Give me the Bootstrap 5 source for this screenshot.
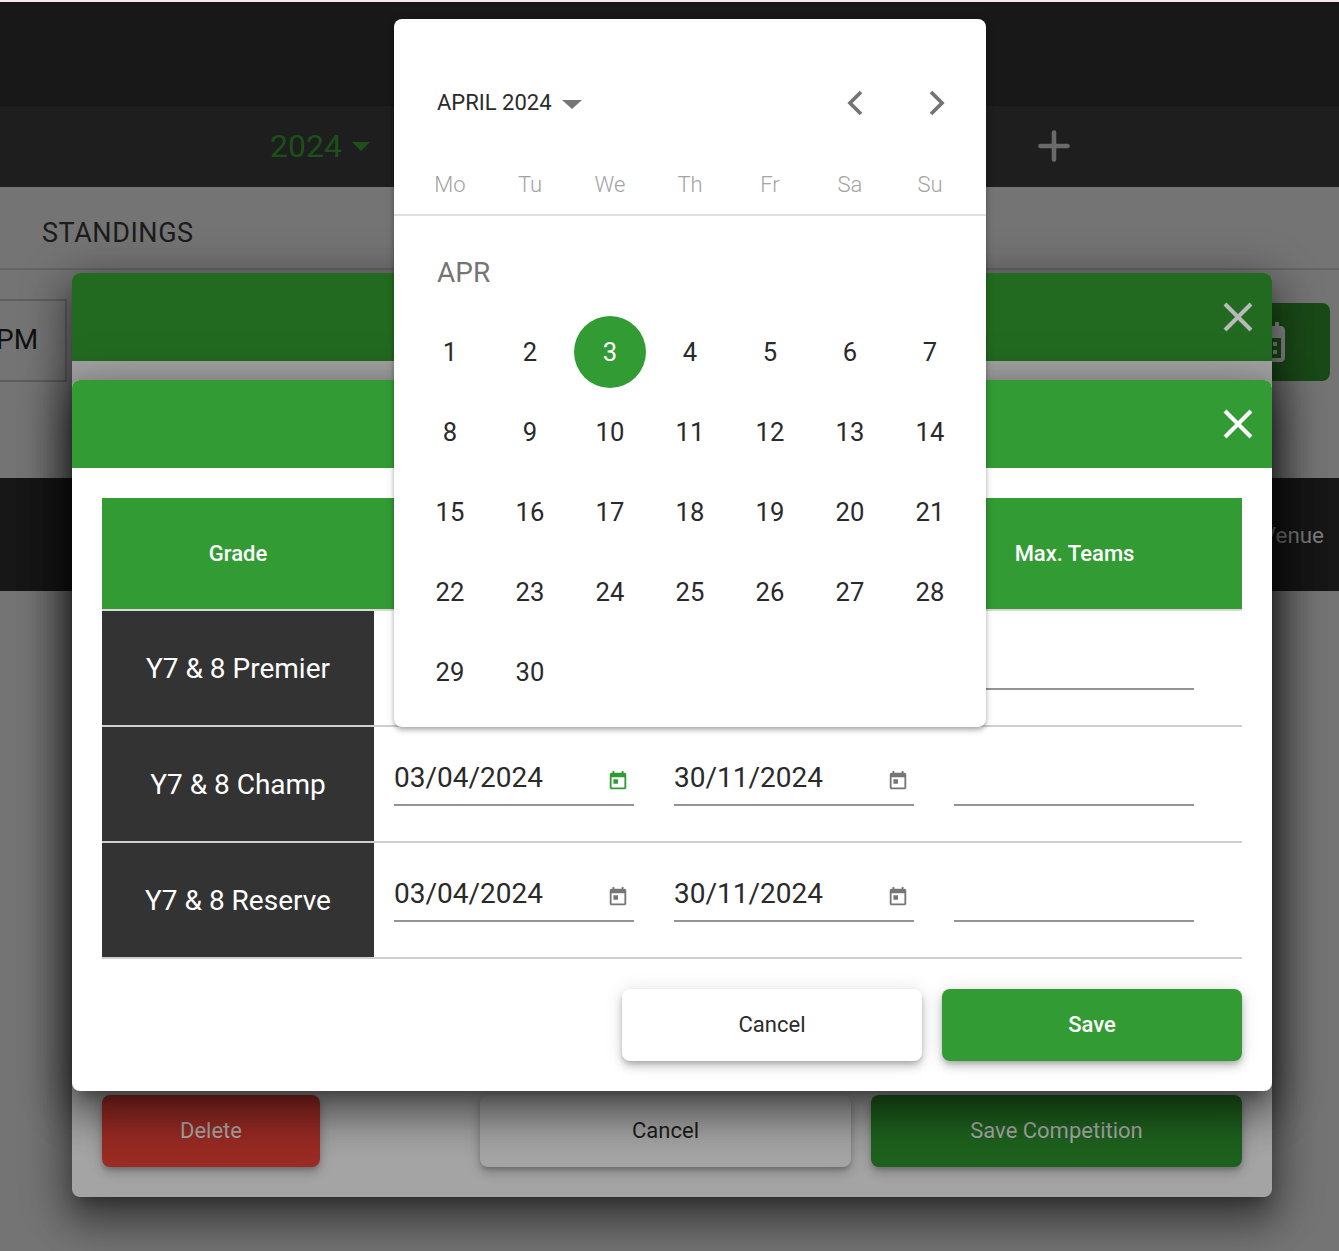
<!DOCTYPE html>
<html lang="en">
<head>
<meta charset="utf-8">
<title>Competition dates</title>
<link rel="stylesheet" href="https://cdn.jsdelivr.net/npm/bootstrap@5.3.0/dist/css/bootstrap.min.css">
<style>
html,body{height:1251px;overflow:hidden;margin:0}
body{font-family:Roboto,"Liberation Sans",sans-serif;background:#747474;color:#222}
.stage{position:relative;width:1339px;height:1251px;overflow:hidden;background:#747474}
.strip{height:2px;background:#f8e9ea}
.topbar{height:104px;background:#181818}
.yearbar{height:81px;background:#1e1e1e;padding-left:270px;padding-right:269px;padding-bottom:1px}
.year{font-size:32px;color:#1b501b;line-height:1}
.yearcaret{width:0;height:0;border-left:9.5px solid transparent;border-right:9.5px solid transparent;border-top:9px solid #1b501b;margin-left:10px}
.tabbar{height:83px;background:#747474;border-bottom:2px solid #656565;padding-left:42px;padding-top:12px;font-size:27px;color:#1c1c1c;letter-spacing:.55px}
.midsec{height:208px;padding-top:29px}
.pmbox{width:77px;height:83px;margin-left:-10px;border:2px solid #5e5e5e;font-size:28px;color:#111;padding-left:4px;padding-bottom:2px}
.calbtn{width:126px;height:78px;margin-top:4px;margin-right:9px;background:#1a4a18;border-radius:8px;padding-left:39px;padding-top:15px}
.calbtn svg{fill:#8a8a8a;display:block}
.darkbar{height:113px;background:#171717;color:#7c7c7c;font-size:22.4px;padding-right:15px;padding-top:3px}
.sheet{position:absolute;left:72px;width:1200px;border-radius:8px;box-shadow:0 24px 38px 3px rgba(0,0,0,.32),0 9px 46px 8px rgba(0,0,0,.28),0 11px 15px -7px rgba(0,0,0,.3)}
.sheet-back{top:273px;height:924px;background:#a4a4a4}
.sheet-front{top:380px;height:711px;background:#fff}
.sheet-head{height:88px;border-radius:8px 8px 0 0;padding-right:16px}
.sheet-back .sheet-head{background:#236a21}
.sheet-front .sheet-head{background:#329b33}
.sheet-x{width:36px;height:36px;display:block;stroke-width:4;fill:none}
.sheet-back .sheet-x{stroke:#b9b9b9}
.sheet-front .sheet-x{stroke:#fff}
.backfoot{position:absolute;left:30px;right:30px;bottom:30px}
.btn.act{height:72px;border:0;border-radius:8px;font-size:22px;padding-bottom:8px;box-shadow:0 3px 5px -1px rgba(0,0,0,.2),0 6px 10px 0 rgba(0,0,0,.14),0 1px 18px 0 rgba(0,0,0,.12)}
.btn.act-del{width:218px;background:#992b24;color:#a9a9a9}
.btn.act-can{width:371px;background:#a4a4a4;color:#1c1c1c;margin-left:160px;margin-right:20px}
.btn.act-sav{width:371px;background:#1e611e;color:#a9a9a9}
.tablewrap{padding:30px 30px 0}
.gridtab{width:1140px;table-layout:fixed;border-collapse:separate;border-spacing:0}
.gridtab th{height:113px;background:#329b33;color:#fff;font-size:22px;font-weight:500;text-align:center;border-bottom:2px solid #d9d9d9}
.gridtab th.lastth{padding-right:28px}
.gridtab td{height:116px;border-bottom:2px solid #cfcfcf;padding:0 20px;vertical-align:top}
.gridtab td.gradecell{background:#333;color:#fff;font-size:28px;font-weight:400;text-align:center;vertical-align:middle;padding:1px 0 0;border-bottom-color:#cfcfcf}
.datefield{margin-top:32px;height:47px;width:240px;border-bottom:2px solid #949494;font-size:28px;line-height:38px;color:#2a2a2a}
.datefield svg{width:22px;height:22px;fill:#757575;margin-top:11px;margin-right:5px}
.datefield.on svg{fill:#2f9c33}
.lastcol{padding-right:48px!important}
.frontfoot{padding:30px 30px 0;gap:20px}
.btn.act-wcan{width:300px;background:#fff;color:#2b2b2b}
.btn.act-wsav{width:300px;background:#329b33;color:#fff;font-weight:500}
.picker{position:absolute;left:394px;top:19px;width:592px;height:708px;background:#fff;border-radius:8px;box-shadow:0 2px 4px -1px rgba(0,0,0,.2),0 4px 5px 0 rgba(0,0,0,.14),0 1px 10px 0 rgba(0,0,0,.12)}
.picker-head{height:64px;margin-top:52px;padding:0 39px 0 43px;color:#2b2b2b;font-size:22px}
.pmonth{margin-top:-2px}
.pcaret{width:0;height:0;border-left:10px solid transparent;border-right:10px solid transparent;border-top:9.5px solid #757575;margin-left:10px;margin-top:2px}
.chev{width:22px;height:28px;fill:none;stroke:#757575;stroke-width:3.8;display:block}
.chevs{gap:58px}
.wkrow{display:grid;grid-template-columns:repeat(7,80px);padding:0 16px;height:50px;margin-top:31px;border-bottom:2px solid #e0e0e0;font-size:22px;color:#a3a3a3;font-weight:300;text-align:center;line-height:38px}
.mlabel{padding:37px 0 0 43px;font-size:28px;line-height:40px;color:#757575;height:96px;margin-bottom:0;font-weight:400}
.daygrid{display:grid;grid-template-columns:repeat(7,80px);grid-auto-rows:80px;padding:0 16px;font-size:25.6px;color:#2a2a2a;margin-top:0;margin-bottom:0}
.dayc{display:flex;align-items:center;justify-content:center}
.dayc.sel span{width:72px;height:72px;border-radius:50%;background:#329b33;color:#fff;display:flex;align-items:center;justify-content:center}
</style>
</head>
<body>
<svg width="0" height="0" class="position-absolute"><defs><symbol id="today" viewBox="0 0 24 24"><path d="M19 3h-1V1h-2v2H8V1H6v2H5c-1.11 0-1.99.9-1.99 2L3 19c0 1.1.89 2 2 2h14c1.1 0 2-.9 2-2V5c0-1.1-.9-2-2-2zm0 16H5V8h14v11zM7 10h5v5H7z"/></symbol></defs></svg>
<div class="stage">
  <div class="strip"></div>
  <div class="topbar"></div>
  <div class="yearbar d-flex align-items-center justify-content-between">
    <div class="d-flex align-items-center"><span class="year">2024</span><span class="yearcaret"></span></div>
    <svg width="32" height="32" viewBox="0 0 32 32" fill="none" stroke="#6a6a6a" stroke-width="4.6" stroke-linecap="round"><path d="M16 2.5v27M2.5 16h27"/></svg>
  </div>
  <div class="tabbar d-flex align-items-center">STANDINGS</div>
  <div class="midsec d-flex justify-content-between align-items-start">
    <div class="pmbox d-flex align-items-center">PM</div>
    <div class="calbtn"><svg width="48" height="48" viewBox="0 0 24 24"><path d="M19 4h-1V2h-2v2H8V2H6v2H5c-1.1 0-2 .9-2 2v14c0 1.1.9 2 2 2h14c1.1 0 2-.9 2-2V6c0-1.1-.9-2-2-2zm0 16H5V10h14v10zM9 14H7v-2h2v2zm4 0h-2v-2h2v2zm4 0h-2v-2h2v2zm-8 4H7v-2h2v2zm4 0h-2v-2h2v2zm4 0h-2v-2h2v2z"/></svg></div>
  </div>
  <div class="darkbar d-flex align-items-center justify-content-end">Venue</div>

  <section class="sheet sheet-back">
    <div class="sheet-head d-flex align-items-center justify-content-end">
      <svg class="sheet-x" viewBox="0 0 36 36"><path d="M5 5l26 26M31 5L5 31"/></svg>
    </div>
    <div class="backfoot d-flex">
      <button class="btn act act-del">Delete</button>
      <button class="btn act act-can">Cancel</button>
      <button class="btn act act-sav">Save Competition</button>
    </div>
  </section>

  <section class="sheet sheet-front">
    <div class="sheet-head d-flex align-items-center justify-content-end">
      <svg class="sheet-x" viewBox="0 0 36 36"><path d="M5 5l26 26M31 5L5 31"/></svg>
    </div>
    <div class="tablewrap">
      <table class="gridtab">
        <colgroup><col style="width:272px"><col style="width:280px"><col style="width:280px"><col style="width:308px"></colgroup>
        <thead><tr><th>Grade</th><th>Start</th><th>End</th><th class="lastth">Max. Teams</th></tr></thead>
        <tbody>
          <tr><td class="gradecell">Y7 &amp; 8 Premier</td>
            <td><div class="datefield d-flex justify-content-between"><span>03/04/2024</span><svg><use href="#today"/></svg></div></td>
            <td><div class="datefield d-flex justify-content-between"><span>30/11/2024</span><svg><use href="#today"/></svg></div></td>
            <td class="lastcol"><div class="datefield"></div></td></tr>
          <tr><td class="gradecell">Y7 &amp; 8 Champ</td>
            <td><div class="datefield on d-flex justify-content-between"><span>03/04/2024</span><svg><use href="#today"/></svg></div></td>
            <td><div class="datefield d-flex justify-content-between"><span>30/11/2024</span><svg><use href="#today"/></svg></div></td>
            <td class="lastcol"><div class="datefield"></div></td></tr>
          <tr><td class="gradecell">Y7 &amp; 8 Reserve</td>
            <td><div class="datefield d-flex justify-content-between"><span>03/04/2024</span><svg><use href="#today"/></svg></div></td>
            <td><div class="datefield d-flex justify-content-between"><span>30/11/2024</span><svg><use href="#today"/></svg></div></td>
            <td class="lastcol"><div class="datefield"></div></td></tr>
        </tbody>
      </table>
    </div>
    <div class="frontfoot d-flex justify-content-end">
      <button class="btn act act-wcan">Cancel</button>
      <button class="btn act act-wsav">Save</button>
    </div>
  </section>

  <aside class="picker">
    <div class="picker-head d-flex align-items-center justify-content-between">
      <div class="d-flex align-items-center"><span class="pmonth">APRIL 2024</span><span class="pcaret"></span></div>
      <div class="d-flex chevs">
        <svg class="chev" viewBox="0 0 22 28"><path d="M16 3L5 14l11 11"/></svg>
        <svg class="chev" viewBox="0 0 22 28"><path d="M6 3l11 11L6 25"/></svg>
      </div>
    </div>
    <div class="wkrow"><span>Mo</span><span>Tu</span><span>We</span><span>Th</span><span>Fr</span><span>Sa</span><span>Su</span></div>
    <div class="mlabel">APR</div>
    <div class="daygrid">
      <div class="dayc">1</div><div class="dayc">2</div><div class="dayc sel"><span>3</span></div><div class="dayc">4</div><div class="dayc">5</div><div class="dayc">6</div><div class="dayc">7</div>
      <div class="dayc">8</div><div class="dayc">9</div><div class="dayc">10</div><div class="dayc">11</div><div class="dayc">12</div><div class="dayc">13</div><div class="dayc">14</div>
      <div class="dayc">15</div><div class="dayc">16</div><div class="dayc">17</div><div class="dayc">18</div><div class="dayc">19</div><div class="dayc">20</div><div class="dayc">21</div>
      <div class="dayc">22</div><div class="dayc">23</div><div class="dayc">24</div><div class="dayc">25</div><div class="dayc">26</div><div class="dayc">27</div><div class="dayc">28</div>
      <div class="dayc">29</div><div class="dayc">30</div>
    </div>
  </aside>
</div>
<script src="https://cdn.jsdelivr.net/npm/bootstrap@5.3.0/dist/js/bootstrap.bundle.min.js"></script>
</body>
</html>
